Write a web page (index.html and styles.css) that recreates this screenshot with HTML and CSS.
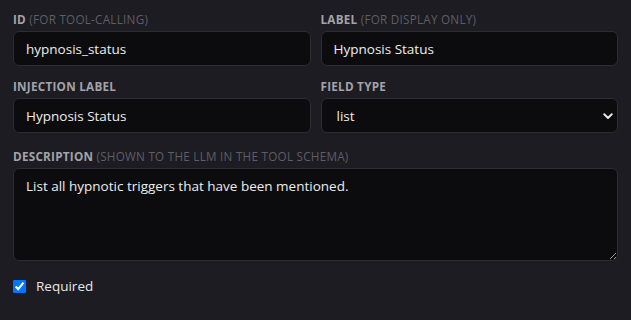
FILE: index.html
```html
<!DOCTYPE html>
<html lang="en">
<head>
<meta charset="utf-8">
<title>Field editor</title>
<link rel="stylesheet" href="styles.css">
</head>
<body>
<form class="form">
  <div class="grid">
    <div class="field">
      <label class="lbl">ID <span class="hint">(for tool-calling)</span></label>
      <input class="ctl" type="text" value="hypnosis_status">
    </div>
    <div class="field">
      <label class="lbl">Label <span class="hint">(for display only)</span></label>
      <input class="ctl" type="text" value="Hypnosis Status">
    </div>
    <div class="field">
      <label class="lbl">Injection Label</label>
      <input class="ctl" type="text" value="Hypnosis Status">
    </div>
    <div class="field">
      <label class="lbl">Field Type</label>
      <div class="select-wrap">
        <select class="ctl sel">
          <option>list</option>
        </select>
        <svg class="chev" width="10" height="7" viewBox="0 0 10 7"><path d="M1.3 1.3 L5 5 L8.7 1.3" fill="none" stroke="#e6e6e6" stroke-width="2" stroke-linecap="round" stroke-linejoin="round"/></svg>
      </div>
    </div>
  </div>
  <div class="field">
    <label class="lbl">Description <span class="hint">(shown to the LLM in the tool schema)</span></label>
    <textarea class="ctl area">List all hypnotic triggers that have been mentioned.</textarea>
  </div>
  <label class="check">
    <input type="checkbox" checked>
    <span>Required</span>
  </label>
</form>
</body>
</html>
```

FILE: styles.css
```css
html, body {
  margin: 0;
  padding: 0;
  background: #1c1c22;
}
body {
  font-family: "Open Sans", "Noto Sans", sans-serif;
  color: #e6e6e6;
}
.form {
  padding: 11px 13px 0 13px;
  display: flex;
  flex-direction: column;
  gap: 15px;
}
.grid {
  display: grid;
  grid-template-columns: 1fr 1fr;
  column-gap: 10px;
  row-gap: 12px;
}
.field {
  display: flex;
  flex-direction: column;
  gap: 4px;
}
.lbl {
  font-size: 11.7px;
  line-height: 16px;
  font-weight: 700;
  text-transform: uppercase;
  letter-spacing: 0.25px;
  color: #a3a3a9;
}
.hint {
  font-weight: 400;
  color: #5e5e66;
}
.ctl {
  box-sizing: border-box;
  width: 100%;
  height: 35px;
  background: #0c0c0f;
  border: 1px solid #2c2c34;
  border-radius: 6px;
  color: #ececec;
  font-family: "Open Sans", "Noto Sans", sans-serif;
  font-size: 13.5px;
  padding: 0 12px;
  margin: 0;
  outline: none;
}
.select-wrap {
  position: relative;
}
.sel {
  appearance: none;
  -webkit-appearance: none;
  padding-left: 15px;
}
.chev {
  position: absolute;
  right: 5px;
  top: 15px;
  pointer-events: none;
}
.area {
  height: 93px;
  padding: 7px 12px;
  line-height: 20px;
  resize: vertical;
  color-scheme: dark;
}
.check {
  display: flex;
  align-items: center;
  gap: 10px;
  font-size: 13.5px;
  color: #e6e6e6;
  margin-top: 1px;
}
.check input {
  width: 13px;
  height: 13px;
  margin: 0;
}
```
